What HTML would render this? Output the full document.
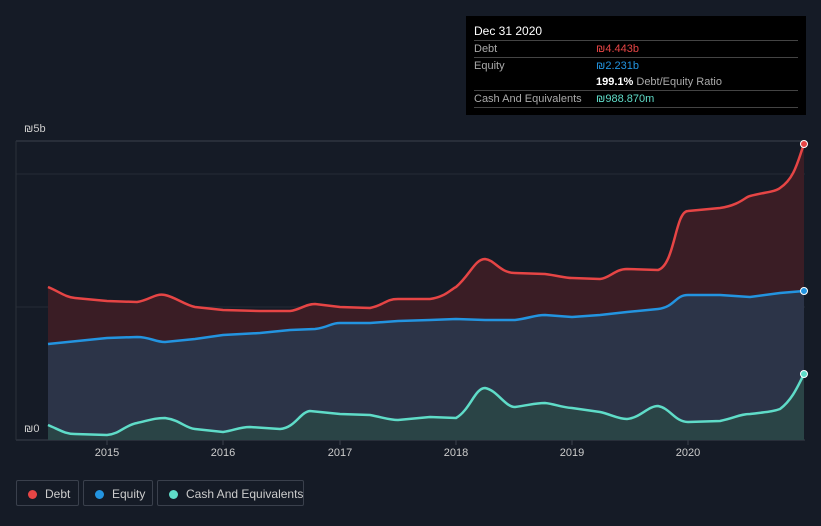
<!DOCTYPE html>
<html><head><meta charset="utf-8"><style>
body{margin:0;width:821px;height:526px;background:#151b26;font-family:"Liberation Sans",sans-serif;overflow:hidden;position:relative}
.tt{position:absolute;left:466px;top:16px;width:340px;height:99px;background:#000;color:#fff;font-size:11px}
.tt .r{position:absolute;left:8px;right:8px;border-top:1px solid #444;height:17px;line-height:17px;color:#aaa;white-space:nowrap}
.tt .v{position:absolute;left:122px}
.leg{position:absolute;top:480px;height:26px;border:1px solid #3a404c;border-radius:2px;color:#ccc;font-size:12px;line-height:26px;box-sizing:border-box;white-space:nowrap}
.leg i{position:absolute;left:11px;top:9px;width:9px;height:9px;border-radius:50%}
</style></head><body>
<svg width="821" height="526" style="position:absolute;left:0;top:0">
<line x1="16" y1="141" x2="805" y2="141" stroke="#3a404c"/>
<line x1="16" y1="174" x2="805" y2="174" stroke="#252b36"/>
<line x1="16" y1="307" x2="805" y2="307" stroke="#252b36"/>
<line x1="16" y1="440" x2="805" y2="440" stroke="#3a404c"/>
<line x1="16" y1="141" x2="16" y2="440" stroke="#2a303b"/>
<path d="M48,287 C60,292 65,297 75,298 L107,301 137,302 C150,300 155,293 165,295 C175,297 185,305 195,307 L223,310 260,311 290,311 C300,310 305,304 315,304 L340,307 370,308 C385,305 385,299 398,299 L430,299 C445,297 450,290 456,287 C470,275 475,259 485,259 C495,260 500,273 515,273 L545,274 C560,276 565,278 572,278 L600,279 C610,278 615,269 627,269 L658,270 C675,265 675,211 688,211 L720,208 C740,205 745,197 750,196 C765,192 775,192 780,188 C795,178 798,160 804,144 L804,440 48,440Z" fill="#3a1d25"/>
<path d="M48,344 L107,338 137,337 C150,337 155,342 165,342 L195,339 223,335 260,333 290,330 315,329 C330,327 330,323 340,323 L370,323 398,321 430,320 456,319 485,320 515,320 C530,318 535,315 545,315 L572,317 600,315 627,312 658,309 C675,307 675,295 688,295 L720,295 750,297 780,293 804,291 L804,440 48,440Z" fill="#2c3448"/>
<path d="M48,425 C60,430 65,434 75,434 L107,435 C120,434 125,425 137,423 C150,420 155,418 165,418 C180,420 185,428 195,429 L223,432 C235,430 240,427 250,427 L280,429 C295,428 300,412 310,411 L340,414 370,415 C385,418 390,420 398,420 L430,417 456,418 C470,410 475,388 485,388 C497,390 505,407 515,407 C530,405 535,403 545,403 C555,404 560,407 572,408 L600,412 C610,414 618,419 627,419 C640,418 648,406 658,406 C670,408 675,422 688,422 L720,421 C735,418 740,414 750,414 C765,412 772,412 780,409 C792,400 798,386 804,374 L804,440 48,440Z" fill="#2a4446"/>
<path d="M48,287 C60,292 65,297 75,298 L107,301 137,302 C150,300 155,293 165,295 C175,297 185,305 195,307 L223,310 260,311 290,311 C300,310 305,304 315,304 L340,307 370,308 C385,305 385,299 398,299 L430,299 C445,297 450,290 456,287 C470,275 475,259 485,259 C495,260 500,273 515,273 L545,274 C560,276 565,278 572,278 L600,279 C610,278 615,269 627,269 L658,270 C675,265 675,211 688,211 L720,208 C740,205 745,197 750,196 C765,192 775,192 780,188 C795,178 798,160 804,144" fill="none" stroke="#e64545" stroke-width="2.5"/>
<path d="M48,344 L107,338 137,337 C150,337 155,342 165,342 L195,339 223,335 260,333 290,330 315,329 C330,327 330,323 340,323 L370,323 398,321 430,320 456,319 485,320 515,320 C530,318 535,315 545,315 L572,317 600,315 627,312 658,309 C675,307 675,295 688,295 L720,295 750,297 780,293 804,291" fill="none" stroke="#2394e0" stroke-width="2.5"/>
<path d="M48,425 C60,430 65,434 75,434 L107,435 C120,434 125,425 137,423 C150,420 155,418 165,418 C180,420 185,428 195,429 L223,432 C235,430 240,427 250,427 L280,429 C295,428 300,412 310,411 L340,414 370,415 C385,418 390,420 398,420 L430,417 456,418 C470,410 475,388 485,388 C497,390 505,407 515,407 C530,405 535,403 545,403 C555,404 560,407 572,408 L600,412 C610,414 618,419 627,419 C640,418 648,406 658,406 C670,408 675,422 688,422 L720,421 C735,418 740,414 750,414 C765,412 772,412 780,409 C792,400 798,386 804,374" fill="none" stroke="#5fdcc8" stroke-width="2.5"/>
<circle cx="804" cy="144" r="3.5" fill="#e64545" stroke="#fff" stroke-width="1"/>
<circle cx="804" cy="291" r="3.5" fill="#2394e0" stroke="#fff" stroke-width="1"/>
<circle cx="804" cy="374" r="3.5" fill="#5fdcc8" stroke="#fff" stroke-width="1"/>
<g fill="#ccc" font-size="11" font-family="Liberation Sans">
<text x="24" y="132">₪5b</text><text x="24" y="432">₪0</text>
<g text-anchor="middle"><text x="107" y="456">2015</text><text x="223" y="456">2016</text><text x="340" y="456">2017</text><text x="456" y="456">2018</text><text x="572" y="456">2019</text><text x="688" y="456">2020</text></g>
</g>
<g stroke="#3a404c"><line x1="107" y1="440" x2="107" y2="445"/><line x1="223" y1="440" x2="223" y2="445"/><line x1="340" y1="440" x2="340" y2="445"/><line x1="456" y1="440" x2="456" y2="445"/><line x1="572" y1="440" x2="572" y2="445"/><line x1="688" y1="440" x2="688" y2="445"/></g>
</svg>
<div class="tt">
<div style="position:absolute;left:8px;top:8px;font-size:12px">Dec 31 2020</div>
<div class="r" style="top:24px">Debt<span class="v" style="color:#e64545">₪4.443b</span></div>
<div class="r" style="top:41px">Equity<span class="v" style="color:#2394e0">₪2.231b</span></div>
<div class="r" style="top:58px;border:0"><span class="v" style="color:#fff;font-weight:bold">199.1% <span style="color:#aaa;font-weight:normal">Debt/Equity Ratio</span></span></div>
<div class="r" style="top:74px">Cash And Equivalents<span class="v" style="color:#5fdcc8">₪988.870m</span></div>
<div class="r" style="top:91px;height:0"></div>
</div>
<div class="leg" style="left:16px;width:63px"><i style="background:#e64545"></i><span style="position:absolute;left:28px">Debt</span></div>
<div class="leg" style="left:83px;width:70px"><i style="background:#2394e0"></i><span style="position:absolute;left:28px">Equity</span></div>
<div class="leg" style="left:157px;width:147px"><i style="background:#5fdcc8"></i><span style="position:absolute;left:28px">Cash And Equivalents</span></div>
</body></html>
